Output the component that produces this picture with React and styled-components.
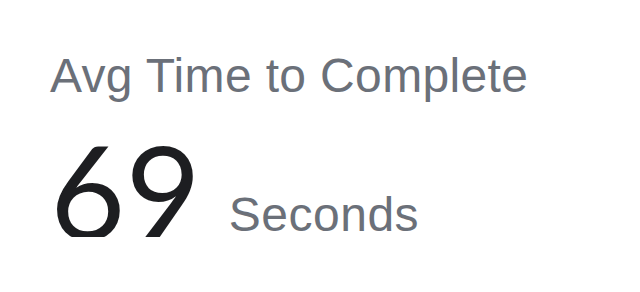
import React from 'react'
import styled, { createGlobalStyle } from 'styled-components'

const Global = createGlobalStyle`
  html, body {
    margin: 0;
    padding: 0;
    background: #ffffff;
  }
`

const Card = styled.div`
  width: 640px;
  height: 292px;
  box-sizing: border-box;
  padding: 52px 0 0 50px;
  background: #ffffff;
  overflow: hidden;
`

const Title = styled.div`
  font-family: "Liberation Sans", Arial, sans-serif;
  font-size: 48px;
  line-height: 48px;
  letter-spacing: 0.35px;
  color: #6b7079;
  white-space: nowrap;
`

const Row = styled.div`
  display: flex;
  align-items: flex-end;
  gap: 28px;
  margin-top: 25px;
`

// the big number is cut off at its foot, as in the source
const Value = styled.div`
  font-family: Lato, "Open Sans", sans-serif;
  font-weight: 400;
  font-size: 130px;
  line-height: 130px;
  height: 112px;
  overflow: hidden;
  color: #1d1e21;
`

const Unit = styled.div`
  font-family: "Liberation Sans", Arial, sans-serif;
  font-size: 48px;
  line-height: 48px;
  letter-spacing: 0.5px;
  color: #6b7079;
  margin-bottom: -2px;
`

export default function App() {
  return (
    <>
      <Global />
      <Card>
        <Title>Avg Time to Complete</Title>
        <Row>
          <Value>69</Value>
          <Unit>Seconds</Unit>
        </Row>
      </Card>
    </>
  )
}
